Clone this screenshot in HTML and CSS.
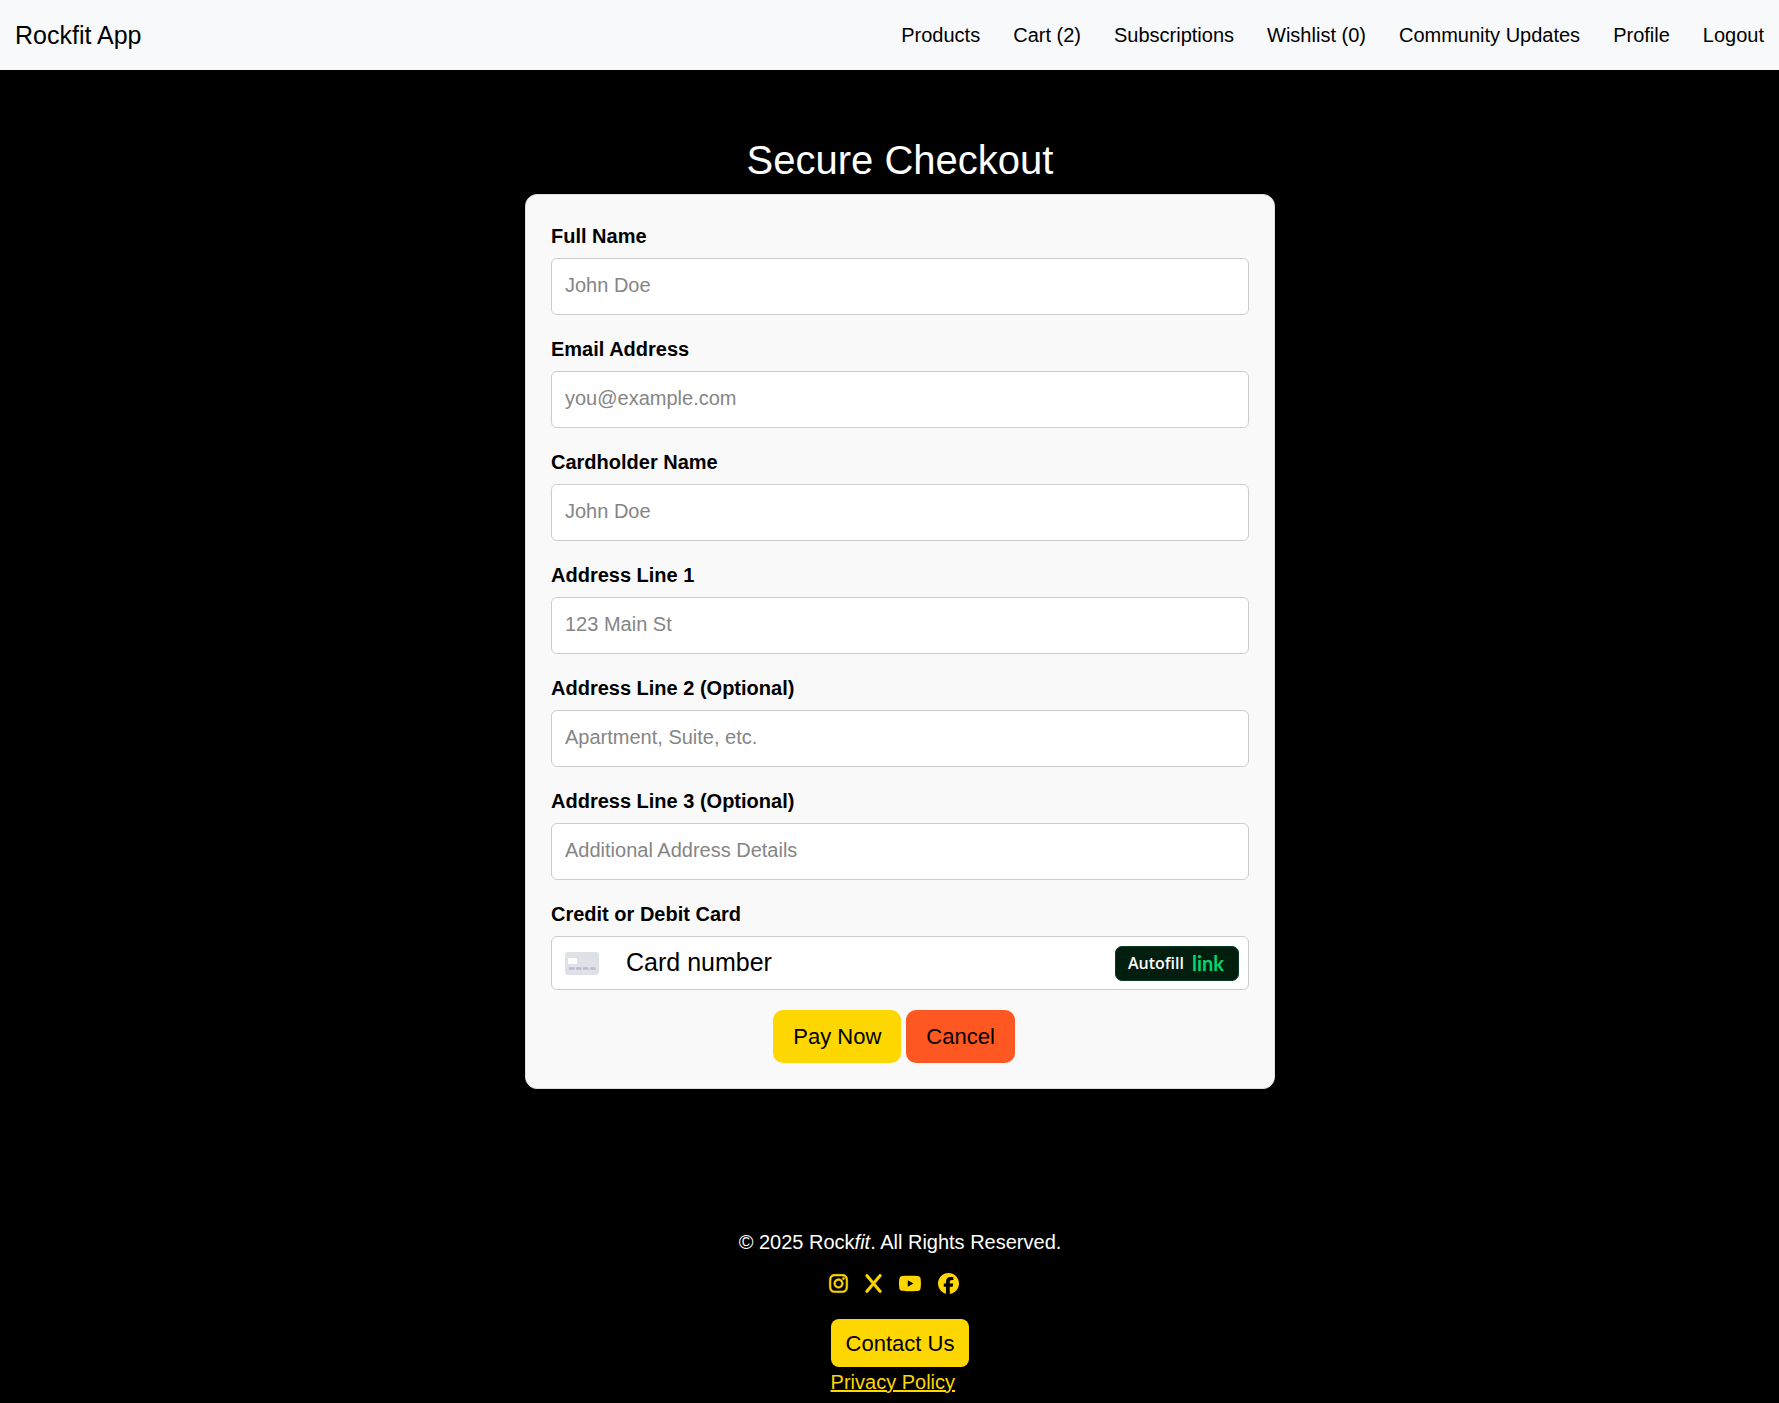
FILE: index.html
```html
<!DOCTYPE html>
<html lang="en">
<head>
<meta charset="utf-8">
<meta name="viewport" content="width=device-width, initial-scale=1">
<title>Rockfit App - Secure Checkout</title>
<link rel="stylesheet" href="styles.css">
</head>
<body>
<header class="navbar">
  <a class="brand" href="#">Rockfit App</a>
  <nav class="nav-links">
    <a href="#">Products</a>
    <a href="#">Cart (2)</a>
    <a href="#">Subscriptions</a>
    <a href="#">Wishlist (0)</a>
    <a href="#">Community Updates</a>
    <a href="#">Profile</a>
    <a href="#">Logout</a>
  </nav>
</header>

<main class="checkout">
  <h1 class="title">Secure Checkout</h1>
  <form class="card">
    <div class="field">
      <label for="full-name">Full Name</label>
      <input id="full-name" type="text" placeholder="John Doe">
    </div>
    <div class="field">
      <label for="email">Email Address</label>
      <input id="email" type="email" placeholder="you@example.com">
    </div>
    <div class="field">
      <label for="cardholder">Cardholder Name</label>
      <input id="cardholder" type="text" placeholder="John Doe">
    </div>
    <div class="field">
      <label for="address1">Address Line 1</label>
      <input id="address1" type="text" placeholder="123 Main St">
    </div>
    <div class="field">
      <label for="address2">Address Line 2 (Optional)</label>
      <input id="address2" type="text" placeholder="Apartment, Suite, etc.">
    </div>
    <div class="field">
      <label for="address3">Address Line 3 (Optional)</label>
      <input id="address3" type="text" placeholder="Additional Address Details">
    </div>
    <div class="field">
      <label for="card-number">Credit or Debit Card</label>
      <div class="card-element">
        <svg class="card-icon" viewBox="0 0 34 23" aria-hidden="true">
          <rect width="34" height="23" rx="3" fill="#dfe1e9"/>
          <rect x="3" y="6" width="9" height="6" rx="1" fill="#fff"/>
          <path d="M4 16.5h5.500M11 16.500h5.500M18 16.500h5.500M25 16.500h5.500" stroke="#b9bbcf" stroke-width="2.500"/>
        </svg>
        <input id="card-number" class="card-number" type="text" inputmode="numeric" placeholder="Card number">
        <button class="autofill" type="button"><span>Autofill</span><span class="link-mark">link</span></button>
      </div>
    </div>
    <div class="actions">
      <button class="btn pay" type="submit">Pay Now</button>
      <button class="btn cancel" type="button">Cancel</button>
    </div>
  </form>
</main>

<footer class="footer">
  <p class="copyright">© 2025 Rock<em>fit</em>. All Rights Reserved.</p>
  <div class="social">
    <a href="#" aria-label="Instagram">
      <svg class="outlined" width="19" height="21" viewBox="0 0 448 512"><path d="M224.100 141c-63.600 0-114.900 51.300-114.900 114.900s51.300 114.900 114.900 114.900S339 319.500 339 255.900 287.700 141 224.100 141zm0 189.600c-41.100 0-74.700-33.500-74.700-74.700s33.500-74.700 74.700-74.700 74.700 33.500 74.700 74.700-33.600 74.700-74.700 74.700zm146.400-194.300c0 14.900-12 26.800-26.800 26.800-14.900 0-26.800-12-26.800-26.800s12-26.800 26.800-26.800 26.800 12 26.800 26.800zm76.100 27.200c-1.700-35.900-9.900-67.700-36.200-93.900-26.200-26.200-58-34.400-93.900-36.200-37-2.100-147.900-2.100-184.900 0-35.800 1.700-67.600 9.900-93.900 36.100s-34.400 58-36.200 93.900c-2.100 37-2.100 147.900 0 184.900 1.700 35.900 9.900 67.700 36.200 93.900s58 34.400 93.900 36.200c37 2.100 147.900 2.100 184.900 0 35.900-1.700 67.700-9.900 93.900-36.200 26.200-26.200 34.400-58 36.200-93.900 2.100-37 2.100-147.800 0-184.800zM398.800 388c-7.800 19.600-22.900 34.700-42.600 42.600-29.500 11.700-99.500 9-132.100 9s-102.700 2.600-132.100-9c-19.600-7.800-34.700-22.900-42.600-42.600-11.700-29.500-9-99.500-9-132.100s-2.600-102.700 9-132.100c7.800-19.600 22.900-34.700 42.600-42.600 29.500-11.700 99.500-9 132.100-9s102.700-2.600 132.100 9c19.600 7.800 34.700 22.900 42.600 42.600 11.700 29.500 9 99.500 9 132.100s2.700 102.700-9 132.100z"/></svg>
    </a>
    <a href="#" aria-label="X">
      <svg class="outlined" width="17" height="21" viewBox="0 0 384 512"><path d="M376.600 84.500c11.300-13.600 9.500-33.800-4.100-45.100s-33.800-9.500-45.100 4.100L192 206 56.600 43.500C45.300 29.900 25.100 28.100 11.500 39.400S-3.900 70.900 7.400 84.500L150.300 256 7.400 427.500c-11.300 13.600-9.500 33.800 4.100 45.100s33.800 9.500 45.100-4.100L192 306 327.400 468.500c11.300 13.600 31.500 15.400 45.100 4.100s15.400-31.500 4.100-45.100L233.700 256 376.600 84.500z"/></svg>
    </a>
    <a href="#" aria-label="YouTube">
      <svg width="22" height="21" viewBox="14 0 548 512"><path d="M549.700 124.100c-6.300-23.700-24.800-42.300-48.300-48.600C458.800 64 288 64 288 64S117.200 64 74.600 75.500c-23.500 6.300-42 24.900-48.300 48.600-11.400 42.900-11.400 132.300-11.400 132.300s0 89.400 11.400 132.300c6.300 23.700 24.800 41.500 48.300 47.800C117.200 448 288 448 288 448s170.800 0 213.400-11.500c23.500-6.300 42-24.200 48.300-47.800 11.400-42.900 11.400-132.300 11.400-132.300s0-89.400-11.400-132.300zm-317.500 213.500V175.200l142.700 81.200-142.700 81.200z"/></svg>
    </a>
    <a href="#" aria-label="Facebook">
      <svg width="21" height="21" viewBox="0 0 512 512"><path d="M512 256C512 114.600 397.400 0 256 0S0 114.600 0 256C0 376 82.700 476.800 194.200 504.500V334.200H141.400V256h52.800V222.300c0-87.100 39.400-127.500 125-127.500 16.200 0 44.200 3.200 55.700 6.400V172c-6-.6-16.500-1-29.600-1-42 0-58.200 15.900-58.200 57.200V256h83.600l-14.400 78.200H287V510.100C413.800 494.800 512 386.900 512 256z"/></svg>
    </a>
  </div>
  <div class="footer-links">
    <button class="contact" type="button">Contact Us</button>
    <a class="privacy" href="#">Privacy Policy</a>
  </div>
</footer>
</body>
</html>
```
FILE: styles.css
```css
* {
  box-sizing: border-box;
}

body {
  margin: 0;
  background: #000;
  color: #000;
  font-family: "Liberation Sans", Arial, sans-serif;
  font-size: 20px;
  line-height: 30px;
}

button,
input {
  font: inherit;
  color: inherit;
}

/* Navigation bar */
.navbar {
  display: flex;
  justify-content: space-between;
  align-items: center;
  min-height: 70px;
  padding: 0 15px;
  background: #f8f9fa;
}

.navbar a {
  color: #000;
  text-decoration: none;
}

.brand {
  font-size: 25px;
}

.nav-links {
  display: flex;
  flex-wrap: wrap;
  gap: 0 33px;
}

/* Checkout form */
.checkout {
  display: flex;
  flex-direction: column;
  align-items: center;
  padding: 66px 0 0 21px;
}

.title {
  margin: 0 0 10px;
  color: #fff;
  font-size: 40px;
  font-weight: 400;
  line-height: 48px;
}

.card {
  width: 100%;
  max-width: 750px;
  padding: 26px 25px 25px;
  border: 1px solid #ddd;
  border-radius: 12px;
  background: #f9f9f9;
}

.field {
  display: flex;
  flex-direction: column;
  gap: 7px;
  margin-bottom: 19px;
}

.field label {
  font-weight: 700;
}

.field > input {
  width: 100%;
  height: 57px;
  padding: 0 13px 2px;
  border: 1px solid #ccc;
  border-radius: 6px;
  background: #fff;
}

.field > input::placeholder {
  color: #858585;
  opacity: 1;
}

.card-element {
  display: flex;
  align-items: center;
  height: 54px;
  padding: 0 9px 0 13px;
  border: 1px solid #ccc;
  border-radius: 6px;
  background: #fff;
}

.card-icon {
  width: 34px;
  height: 23px;
}

.card-number {
  flex: 1;
  min-width: 0;
  margin-left: 27px;
  padding: 0 0 2px;
  border: 0;
  background: none;
  font-size: 25px;
}

.card-number::placeholder {
  color: #000;
  opacity: 1;
}

.autofill {
  display: flex;
  align-items: center;
  gap: 8px;
  height: 35px;
  padding: 0 14px 0 12px;
  border: 1px solid #0a3a24;
  border-radius: 7px;
  background: #011e0f;
  color: #fff;
  font-family: "Open Sans", "Noto Sans", sans-serif;
  font-size: 16px;
  font-weight: 600;
}

.link-mark {
  color: #00d66f;
  font-family: Lato, sans-serif;
  font-size: 20px;
  font-weight: 700;
}

.actions {
  display: flex;
  justify-content: center;
  gap: 5px;
  padding: 1px 12px 0 0;
}

.btn {
  padding: 10px 20px;
  border: 0;
  border-radius: 10px;
  font-size: 22px;
  line-height: 33px;
}

.pay {
  background: #ffd700;
}

.cancel {
  background: #ff5722;
}

/* Footer */
.footer {
  display: flex;
  flex-direction: column;
  align-items: center;
  padding: 138px 0 6px 21px;
}

.copyright {
  margin: 0;
  color: #fff;
}

.social {
  display: flex;
  gap: 17px;
  padding: 16px 12px 25px 0;
}

.social svg {
  display: block;
  fill: #ffd700;
}

.social .outlined {
  overflow: visible;
  stroke: #ffd700;
  stroke-width: 14;
}

.footer-links {
  display: flex;
  flex-direction: column;
  align-items: flex-start;
}

.contact {
  padding: 8px 15px 7px;
  border: 0;
  border-radius: 8px;
  background: #ffd700;
  font-size: 22px;
  line-height: 33px;
}

.privacy {
  color: #ffd700;
}
```
